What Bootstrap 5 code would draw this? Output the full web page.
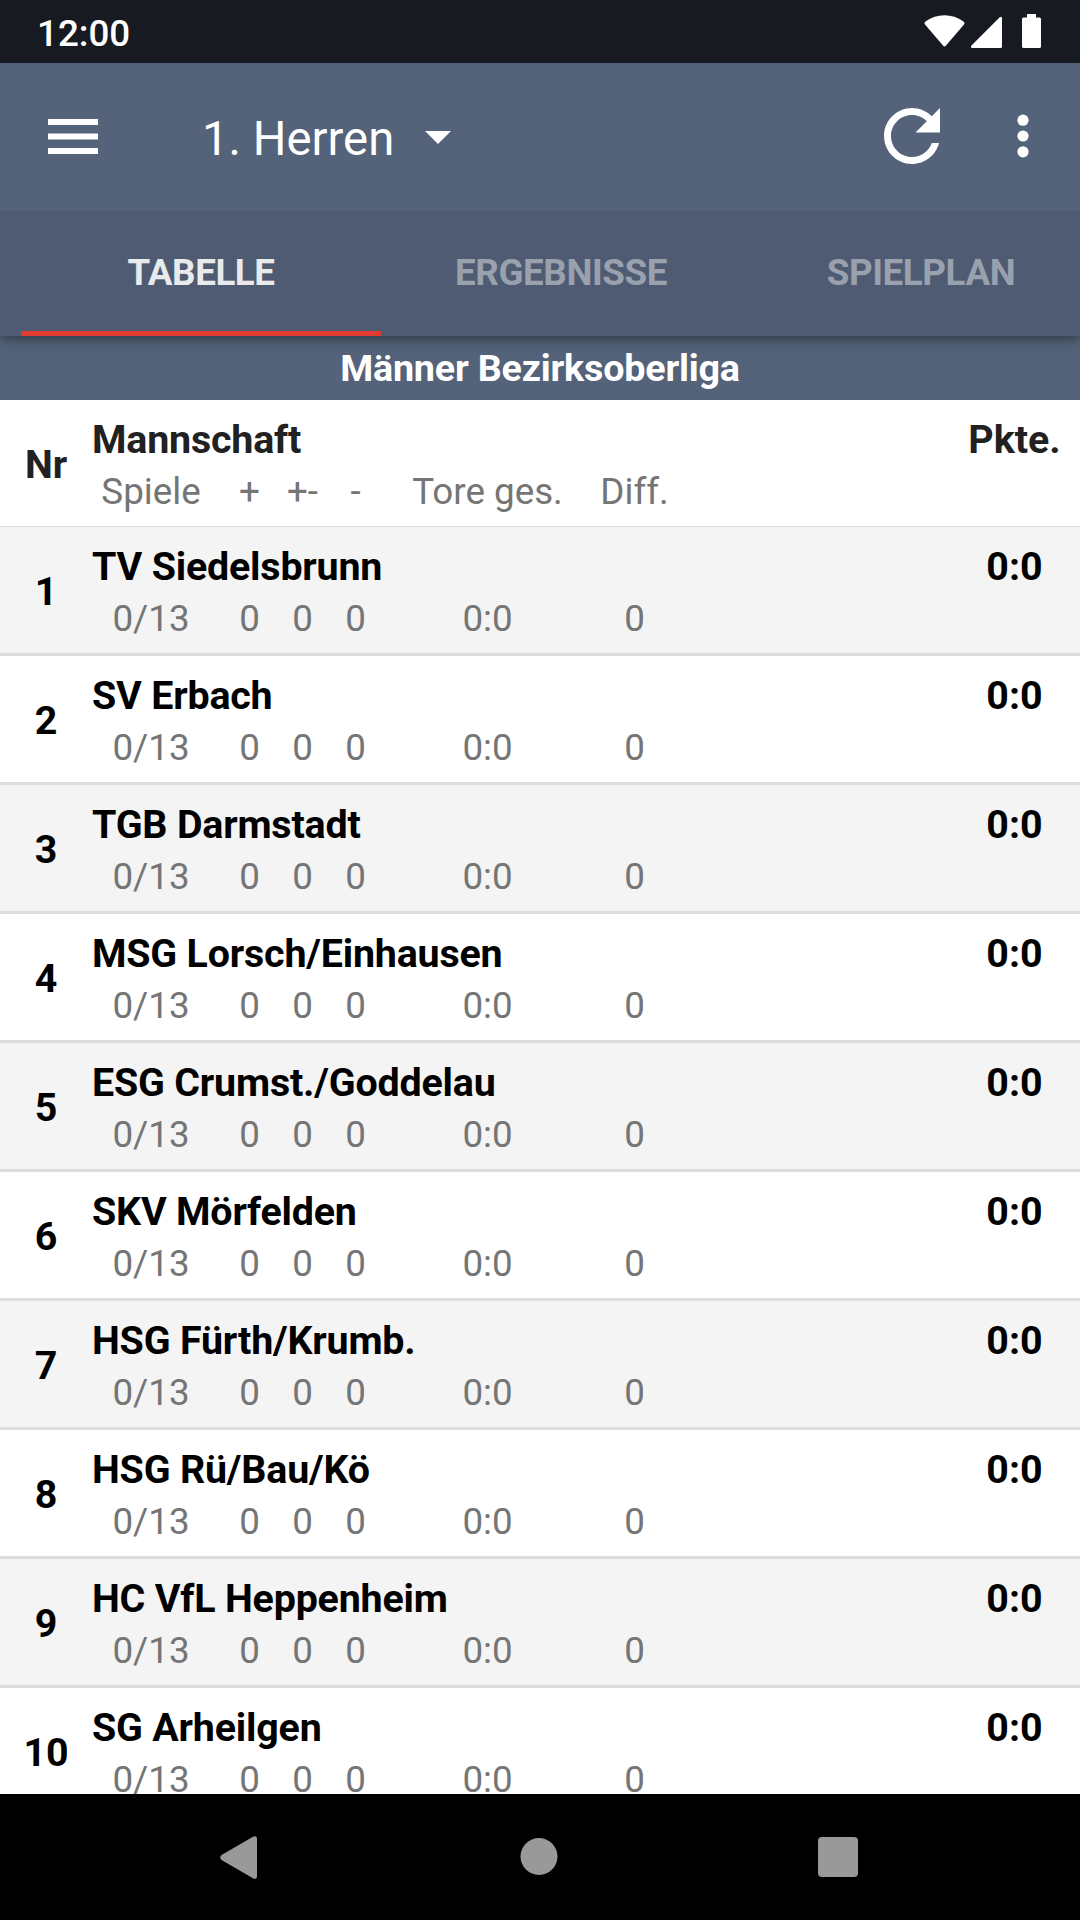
<!DOCTYPE html>
<html lang="de">
<head>
<meta charset="utf-8">
<meta name="viewport" content="width=device-width, initial-scale=1">
<title>1. Herren – Tabelle</title>
<link href="https://cdn.jsdelivr.net/npm/bootstrap@5.3.0/dist/css/bootstrap.min.css" rel="stylesheet">
<style>
  body { font-family: Roboto, "Noto Sans", sans-serif; color: #000; }
  svg { display: block; flex: none; }
  .screen { width: 1080px; height: 1920px; }
  .statusbar { height: 63px; background: #171a21; padding: 0 39px 0 37px; }
  .clock { font-size: 36.75px; font-weight: 500; line-height: 67px; }
  .toolbar { height: 147px; background: #546379; padding-left: 48px; padding-right: 35px; padding-bottom: 1px; }
  .toolbar-title { font-size: 47.25px; line-height: 56px; margin: 5px 0 0 104px; }
  .caret-icon { margin: 3px 0 0 31px; }
  .reload-icon { margin-right: 47px; }
  .tabstrip { height: 126px; background: #4f5b72; padding-left: 21px; box-shadow: 0 2px 12px rgba(30, 40, 45, .8); clip-path: inset(0 0 -20px 0); z-index: 1; }
  .tabstrip .nav-link { flex: 0 0 360px; padding: 0; line-height: 126px; font-size: 36.75px; font-weight: 700; letter-spacing: -.42px; color: #99a1ae; border-radius: 0; border-bottom: 5px solid transparent; height: 126px; }
  .tabstrip .nav-link.active { color: #e9eaec; border-bottom-color: #e23b32; }
  .league { height: 64px; background: #546379; font-size: 37.7px; line-height: 65px; letter-spacing: -.2px; }
  .team-row { height: 129px; border-bottom: 3px solid #dcdcdc; background: #fff; }
  .team-row.shaded { background: #f4f4f4; }
  .head-row { height: 127px; border-bottom: 1px solid #dcdcdc; color: #212121; }
  .rank { width: 92px; font-size: 39.4px; line-height: 46px; padding-top: 3px; }
  .team-name, .points { font-size: 39.4px; line-height: 47px; padding-top: 16px; }
  .team-name { letter-spacing: -.19px; }
  .points { width: 131px; }
  .stats { font-size: 36.75px; line-height: 58px; color: #757575; }
  .stats span { text-align: center; white-space: nowrap; }
  .c-games { width: 118px; margin-right: 13px; }
  .c-small { width: 53px; }
  .c-goals { width: 211px; }
  .c-diff { width: 83px; }
  .navbuttons { height: 126px; background: #000; padding: 0 222px 0 220px; }
  .home-icon { position: relative; left: 1px; }
</style>
<script src="https://cdn.jsdelivr.net/npm/bootstrap@5.3.0/dist/js/bootstrap.bundle.min.js"></script>
</head>
<body>
<div class="screen d-flex flex-column overflow-hidden">
  <header class="statusbar d-flex flex-shrink-0 justify-content-between text-white">
    <span class="clock">12:00</span>
    <svg width="118" height="63" viewBox="923 0 118 63" fill="#fff">
      <path d="M925 24.500Q923.500 23 925.500 21.500C937 13 952 13 963.500 21.500Q965.500 23 964 24.500L946 45.500Q944.500 47.500 943 45.500Z"/>
      <path d="M999.500 17.500Q1002 15.500 1002 18.500V46.500Q1002 48 1000.500 48H972.500Q970 48 971.500 45.500Z"/>
      <path d="M1027 14h9v3.500h3.500q1.500 0 1.500 1.500v27.500q0 1.500-1.500 1.500h-16q-1.500 0-1.500-1.500V19q0-1.500 1.500-1.500h3.500z"/>
    </svg>
  </header>

  <nav class="toolbar d-flex flex-shrink-0 align-items-center text-white">
    <svg width="50" height="35" viewBox="0 0 50 35" fill="#fff"><path d="M0 0h50v6H0zM0 14.500h50v6H0zM0 29h50v6H0z"/></svg>
    <span class="toolbar-title">1. Herren</span>
    <svg class="caret-icon" width="26" height="13" viewBox="0 0 26 13" fill="#fff"><path d="M0 0h26L13 13z"/></svg>
    <svg class="reload-icon ms-auto" width="84" height="84" viewBox="0 0 24 24" fill="#fff"><path d="M17.650 6.350C16.200 4.900 14.210 4 12 4c-4.420 0-7.990 3.580-7.990 8s3.570 8 7.990 8c3.730 0 6.840-2.550 7.730-6h-2.080c-.820 2.330-3.040 4-5.650 4-3.310 0-6-2.690-6-6s2.690-6 6-6c1.660 0 3.140.690 4.220 1.780L13 11h7V4l-2.350 2.350z"/></svg>
    <svg width="44" height="44" viewBox="0 0 44 44" fill="#fff"><circle cx="22" cy="6.200" r="5.600"/><circle cx="22" cy="22" r="5.600"/><circle cx="22" cy="37.800" r="5.600"/></svg>
  </nav>

  <div class="tabstrip nav flex-nowrap flex-shrink-0 position-relative text-center">
    <a class="nav-link active">TABELLE</a>
    <a class="nav-link">ERGEBNISSE</a>
    <a class="nav-link">SPIELPLAN</a>
  </div>

  <div class="league flex-shrink-0 text-center text-white fw-bold">Männer Bezirksoberliga</div>

  <main id="standings" class="flex-grow-1 overflow-hidden bg-white">
    <div class="head-row d-flex">
      <div class="rank fw-bold text-center align-self-center">Nr</div>
      <div class="flex-grow-1">
        <div class="team-name fw-bold">Mannschaft</div>
        <div class="stats d-flex"><span class="c-games">Spiele</span><span class="c-small">+</span><span class="c-small">+-</span><span class="c-small">-</span><span class="c-goals">Tore ges.</span><span class="c-diff">Diff.</span></div>
      </div>
      <div class="points fw-bold text-center">Pkte.</div>
    </div>
  </main>

  <footer class="navbuttons d-flex flex-shrink-0 align-items-center justify-content-between">
    <svg width="37" height="43" viewBox="0 0 37 43" fill="#999"><path d="M33 .700Q37-1 37 3V40Q37 44 33 42.300L1.500 24Q-1 21.500 1.500 19Z"/></svg>
    <svg class="home-icon" width="38" height="38" viewBox="0 0 38 38" fill="#999"><circle cx="19" cy="18.500" r="18.500"/></svg>
    <svg width="40" height="40" viewBox="0 0 40 40" fill="#999"><rect width="40" height="40" rx="4"/></svg>
  </footer>
</div>
<script>
  const teams = ["TV Siedelsbrunn", "SV Erbach", "TGB Darmstadt", "MSG Lorsch/Einhausen", "ESG Crumst./Goddelau",
    "SKV Mörfelden", "HSG Fürth/Krumb.", "HSG Rü/Bau/Kö", "HC VfL Heppenheim", "SG Arheilgen"];
  document.getElementById("standings").insertAdjacentHTML("beforeend", teams.map((team, i) => `
    <div class="team-row d-flex ${i % 2 ? "" : "shaded"}">
      <div class="rank fw-bold text-center align-self-center">${i + 1}</div>
      <div class="flex-grow-1">
        <div class="team-name fw-bold">${team}</div>
        <div class="stats d-flex"><span class="c-games">0/13</span><span class="c-small">0</span><span class="c-small">0</span><span class="c-small">0</span><span class="c-goals">0:0</span><span class="c-diff">0</span></div>
      </div>
      <div class="points fw-bold text-center">0:0</div>
    </div>`).join(""));
</script>
</body>
</html>
